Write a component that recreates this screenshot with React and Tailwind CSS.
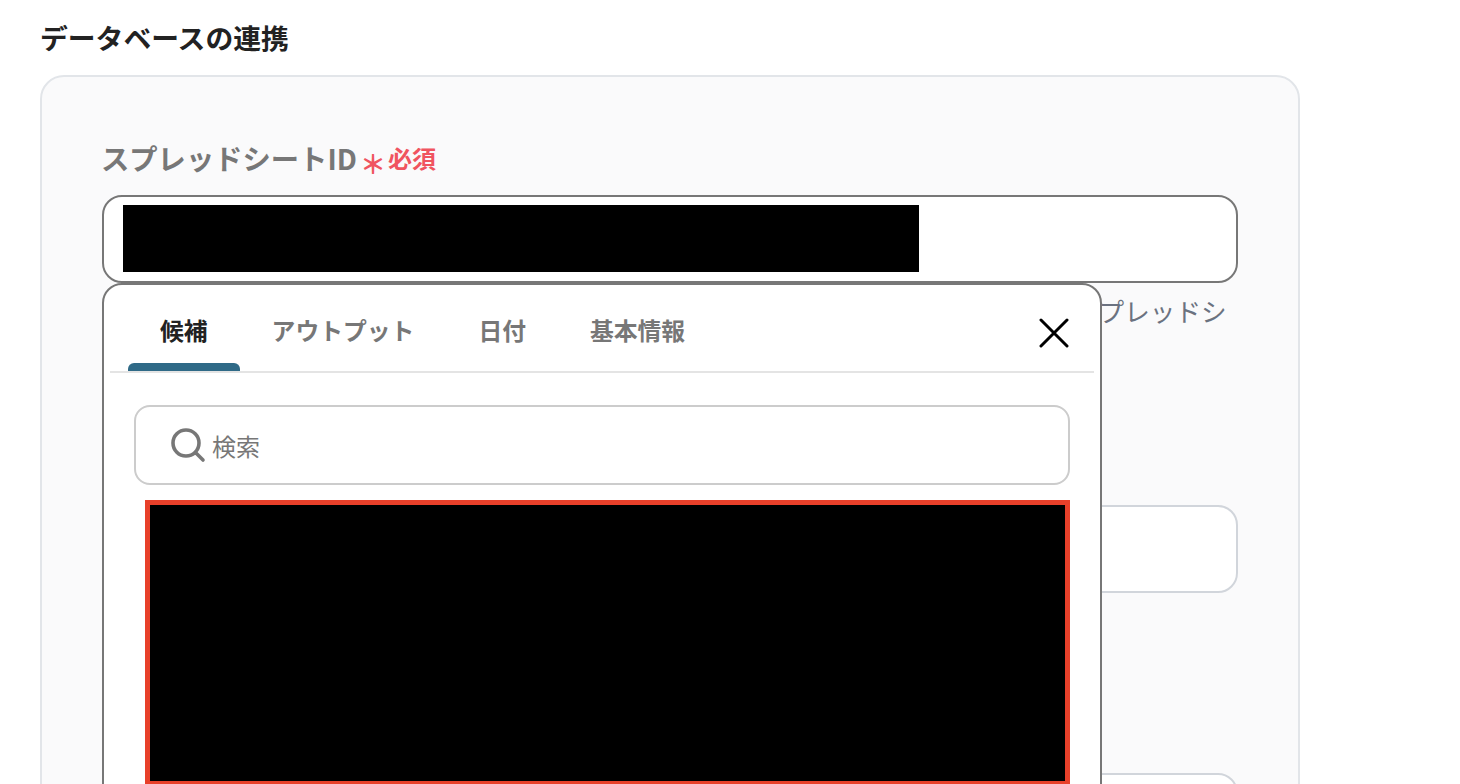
import React from "react";

const font = { fontFamily: '"Noto Sans CJK JP", "Noto Sans", sans-serif' };

function Tab({ label, active }) {
  return (
    <div className={`relative h-[86px] px-8 pt-[25px] text-[23.8px] leading-[40px] font-bold ${active ? "text-[#222222]" : "text-[#777777]"}`}>
      {label}
      {active && <div className="absolute bottom-0 left-0 right-0 h-2 rounded-t-md bg-[#2f6a87]"></div>}
    </div>
  );
}

function SearchPopup() {
  return (
    <div className="absolute left-0 top-full z-10 h-[620px] w-[1000px] rounded-t-[20px] border-2 border-[#777777] bg-white">
      <div className="relative mx-[6px] flex border-b-2 border-[#e4e4e4] pl-[18px]">
        <Tab label="候補" active />
        <Tab label="アウトプット" />
        <Tab label="日付" />
        <Tab label="基本情報" />
        <svg className="absolute right-[25px] top-[33px]" width="30" height="30" viewBox="0 0 30 30" fill="none" stroke="#000000" strokeWidth="3" strokeLinecap="round">
          <path d="M2 2l26 26M28 2L2 28" />
        </svg>
      </div>
      <div className="ml-[30px] mr-[30px] mt-[32px]">
        <div className="flex h-20 items-center rounded-2xl border-2 border-[#cccccc] bg-white pl-[34px]">
          <svg width="36" height="36" viewBox="0 0 36 36" fill="none" stroke="#777777" strokeWidth="3.6" strokeLinecap="round">
            <circle cx="16" cy="16" r="13" />
            <path d="M26 26l7 7" />
          </svg>
          <span className="ml-[6px] mt-[1px] text-2xl text-[#777777]">検索</span>
        </div>
        <div className="ml-[11px] mt-[15px] h-[286px] border-[5px] border-[#e8402a] bg-black"></div>
      </div>
    </div>
  );
}

function Label({ text }) {
  return (
    <div className="mb-[17px] flex h-10 items-center text-[28.3px] font-bold text-[#777777]">
      <span className="ml-[-1px]">{text}</span>
      <span className="ml-[3px] mt-[10px] text-[26px] leading-none text-[#f0545f]">＊</span>
      <span className="ml-[2px] text-2xl text-[#f0545f]">必須</span>
    </div>
  );
}

export default function App() {
  return (
    <div className="h-[784px] w-[1460px] overflow-hidden bg-white pl-10" style={font}>
      <h2 className="flex h-[75px] items-center text-[27.8px] font-bold text-[#222222]">データベースの連携</h2>
      <div className="h-[900px] w-[1260px] rounded-[24px] border-2 border-[#e2e5e9] bg-[#fafafb] px-[60px] pt-[61px]">
        <div className="w-[1136px]">
          <Label text="スプレッドシートID" />
          <div className="relative">
            <div className="flex h-[88px] items-center rounded-[20px] border-2 border-[#777777] bg-white pb-[2px] pl-[19px]">
              <div className="h-[67px] w-[796px] bg-black"></div>
            </div>
            <SearchPopup />
          </div>
          <p className="mt-[10px] h-[72px] text-[25.6px] leading-9 text-[#6b7280]">
            候補から選択してください。候補に表示されない場合は、連携したい対象ファイルのスプレッドシートのIDを入力してください。
          </p>
        </div>
        <div className="mt-[83px] w-[1136px]">
          <Label text="シートID" />
          <div className="h-[88px] rounded-[20px] border-2 border-[#d1d5db] bg-white"></div>
        </div>
        <div className="mt-[123px] w-[1136px]">
          <Label text="テーブル範囲" />
          <div className="h-[88px] rounded-[20px] border-2 border-[#d1d5db] bg-white"></div>
        </div>
      </div>
    </div>
  );
}
